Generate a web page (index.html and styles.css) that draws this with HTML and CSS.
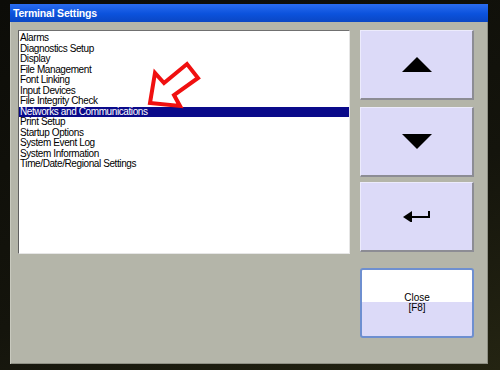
FILE: index.html
```html
<!DOCTYPE html>
<html lang="en">
<head>
    <meta charset="UTF-8">
    <meta name="viewport" content="width=device-width, initial-scale=1.0">
    <title>Terminal Settings</title>
    <link rel="stylesheet" href="styles.css">
</head>
<body>
    <div class="window">
        <div class="titlebar">Terminal Settings</div>

        <div class="content">
            <!-- список настроек -->
            <div class="listbox">
                <div class="item">Alarms</div>
                <div class="item">Diagnostics Setup</div>
                <div class="item">Display</div>
                <div class="item">File Management</div>
                <div class="item">Font Linking</div>
                <div class="item">Input Devices</div>
                <div class="item">File Integrity Check</div>
                <div class="item selected">Networks and Communications</div>
                <div class="item">Print Setup</div>
                <div class="item">Startup Options</div>
                <div class="item">System Event Log</div>
                <div class="item">System Information</div>
                <div class="item">Time/Date/Regional Settings</div>

                <svg class="pointer" width="75" height="55" viewBox="0 0 75 55">
                    <polygon points="20,43 25,13 34,23 57,4 68,18 44,35 50,46" fill="none" stroke="#f01010" stroke-width="4" stroke-linejoin="miter"/>
                </svg>
            </div>

            <!-- кнопки -->
            <div class="buttons">
                <button class="btn btn-up">
                    <svg width="30" height="15" viewBox="0 0 30 15"><polygon points="15,0 30,15 0,15" fill="#000"/></svg>
                </button>
                <button class="btn btn-down">
                    <svg width="30" height="15" viewBox="0 0 30 15"><polygon points="0,0 30,0 15,15" fill="#000"/></svg>
                </button>
                <button class="btn btn-enter">
                    <svg width="28" height="11" viewBox="0 0 28 11">
                        <polygon points="0,6 9,0 9,12" fill="#000"/>
                        <rect x="7" y="5" width="20" height="2" fill="#000"/>
                        <rect x="25" y="0" width="2" height="7" fill="#000"/>
                    </svg>
                </button>
                <button class="btn btn-close">Close<br>[F8]</button>
            </div>
        </div>
    </div>
</body>
</html>
```

FILE: styles.css
```css
body {
    margin: 0;
    padding: 0;
    width: 500px;
    height: 370px;
    overflow: hidden;
    background: linear-gradient(160deg, #0c0c08 0%, #14140c 60%, #242412 100%);
    font-family: "Liberation Sans", Arial, sans-serif;
}
.window {
    margin: 4px 0 0 10px;
    width: 478px;
    height: 360px;
    background-color: #b4b5a9;
    box-shadow: inset 1px 0 0 #c8c9be, inset -1px -1px 0 #8e8f84;
}
.titlebar {
    height: 18px;
    line-height: 18px;
    padding-left: 3px;
    color: #fff;
    font-size: 10.5px;
    font-weight: bold;
    letter-spacing: -0.2px;
    background: linear-gradient(to bottom, #2a6cf0 0%, #0b52dc 55%, #0a46c4 100%);
}
.content {
    display: flex;
    padding: 8px 14px 0 8px;
}
.listbox {
    position: relative;
    width: 330px;
    height: 220px;
    padding-top: 2px;
    background-color: #fff;
    border-top: 1px solid #707070;
    border-left: 1px solid #606060;
    border-right: 1px solid #e6e6e6;
    border-bottom: 1px solid #e6e6e6;
}
.item {
    height: 10.5px;
    line-height: 10.5px;
    padding-left: 1px;
    font-size: 10px;
    letter-spacing: -0.4px;
    color: #000;
    white-space: nowrap;
}
.item.selected {
    background-color: #0a0a8a;
    color: #fff;
}
.pointer {
    position: absolute;
    left: 111px;
    top: 29px;
}
.buttons {
    display: flex;
    flex-direction: column;
    margin-left: 10px;
}
.btn {
    width: 114px;
    height: 70px;
    padding: 0;
    display: flex;
    align-items: center;
    justify-content: center;
    background-color: #dcdaf8;
    border-top: 1px solid #ecebfc;
    border-left: 1px solid #ecebfc;
    border-right: 2px solid #8c8c94;
    border-bottom: 2px solid #8c8c94;
}
.btn-down {
    margin-top: 7px;
}
.btn-enter {
    margin-top: 5px;
}
.btn-close {
    margin-top: 16px;
    border: 2px solid #6e8fd0;
    border-radius: 3px;
    background: linear-gradient(to bottom, #ffffff 0%, #ffffff 48%, #dcdaf8 48%, #dcdaf8 100%);
    font-family: "Liberation Sans", Arial, sans-serif;
    font-size: 10px;
    line-height: 10px;
    color: #000;
    text-align: center;
    flex-direction: column;
}
```
